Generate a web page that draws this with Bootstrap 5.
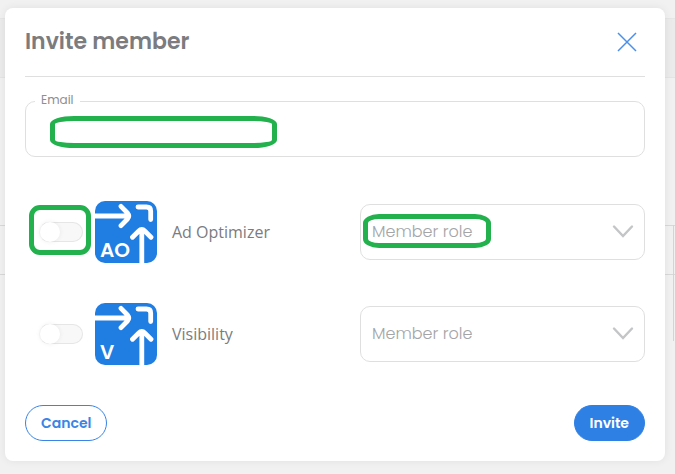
<!DOCTYPE html>
<html lang="en">
<head>
<meta charset="utf-8">
<meta name="viewport" content="width=device-width, initial-scale=1">
<title>Invite member</title>
<link href="https://cdn.jsdelivr.net/npm/bootstrap@5.3.0/dist/css/bootstrap.min.css" rel="stylesheet">
<style>
  body { background: #f1f1f1; color: #7a7c7f; font-family: Poppins, Inter, sans-serif; }
  .backdrop-page { z-index: -1; }
  .backdrop-band { height: 60px; margin-top: 18px; background: #ebebeb; border-top: 1px solid #e6e6e6; border-bottom: 1px solid #e4e4e4; }
  .backdrop-row { height: 50px; margin-top: 147px; border-top: 1px solid #d8d8d8; border-bottom: 1px solid #d8d8d8; }
  .backdrop-side { height: 116px; margin-top: -50px; margin-right: 1px; border-right: 1px solid #d4d4d4; }
  .shell { padding: 8px 10px 13px 5px; }
  .dialog-panel { border-radius: 8px; padding: 20px; box-shadow: 0 0 8px rgba(0,0,0,.07); }
  .dialog-head { height: 49px; padding-bottom: 20px; border-bottom: 1px solid #dfdfdf; }
  .dialog-title { font-size: 22px; line-height: 28px; }
  .close-btn { padding: 0 8px; line-height: 0; }
  .field { height: 56px; border: 1px solid #dfdfdf; border-radius: 10px; color: #a3a5a7; background: #fff; font-size: 16px; font-weight: 300; }
  .email-box { margin-top: 24px; }
  .email-box .field { padding: 0 24px; }
  .email-label { top: -9px; left: 10px; padding: 0 6px; font-size: 12px; line-height: 16px; color: #8c8e90; background: #fff; }
  .products { margin-top: 44px; gap: 40px; }
  .product { display: grid; grid-template-columns: minmax(0, 335fr) minmax(0, 285fr); }
  .product-name { font-family: "Open Sans", sans-serif; font-size: 16px; margin-left: 15px; }
  .switch-box { width: 70px; padding-left: 14px; }
  .toggle { appearance: none; width: 44px; height: 20px; border: 1px solid #e6e6e6; border-radius: 10px; background: #f8f8f8; display: flex; align-items: center; }
  .toggle::before { content: ""; width: 20px; height: 20px; border-radius: 50%; background: #fff; box-shadow: 0 0 5px rgba(0,0,0,.07); }
  .toggle:not(:checked) { border-left-color: transparent; }
  .toggle:checked { justify-content: flex-end; background: #2f80e4; }
  .role-select { appearance: none; padding: 0 44px 0 11px; }
  .chevron { right: 11px; top: 20px; pointer-events: none; }
  .marker { pointer-events: none; border: 5px solid #22b14c; }
  .marker-email { left: 25px; top: 15px; width: 227px; height: 32px; border-radius: 24px / 8px; }
  .marker-switch { left: 4px; top: -17px; width: 62px; height: 50px; border-radius: 11px; }
  .marker-role { left: 3px; top: 10px; width: 128px; height: 34px; border-radius: 16px / 9px; }
  .logo-text { fill: #fff; font-size: 20px; font-weight: 600; }
  .dialog-actions { margin-top: 40px; }
  .pill { height: 36px; padding: 0 15px; font-size: 14px; font-weight: 600; --bs-btn-color: #3984e6; --bs-btn-border-color: #3984e6; }
  .pill-main { --bs-btn-color: #fff; --bs-btn-bg: #2f80e4; --bs-btn-border-color: #2f80e4; }
</style>
</head>
<body>
<div class="backdrop-page position-absolute top-0 start-0 w-100 overflow-hidden" aria-hidden="true">
  <div class="backdrop-band"></div>
  <div class="backdrop-row"></div>
  <div class="backdrop-side"></div>
</div>
<svg class="d-none" aria-hidden="true">
  <symbol id="logo" viewBox="0 0 62 62">
    <rect width="62" height="62" rx="10" fill="#207de2"/>
    <g fill="none" stroke="#fff" stroke-width="4.800" stroke-linecap="round" stroke-linejoin="round">
      <path d="M-3 15H33M26 5.300L32.500 12Q35 15 32.500 18L26 24.700M43 6H51.500Q55.700 6 55.700 10V18.500M46.800 65V30M37.500 36.300L43.800 30Q46.800 26.800 49.800 30L56 36.300"/>
    </g>
  </symbol>
  <symbol id="chev" viewBox="0 0 22 14"><path d="M2 2.500L11 12 20 2.500" fill="none" stroke="#c3c5c6" stroke-width="2.400" stroke-linecap="round"/></symbol>
</svg>
<main class="shell">
  <form class="dialog-panel bg-white" role="dialog" aria-labelledby="dialog-title">
    <header class="dialog-head d-flex align-items-center justify-content-between">
      <h1 class="dialog-title fw-semibold m-0" id="dialog-title">Invite member</h1>
      <button type="button" class="close-btn btn border-0" aria-label="Close">
        <svg width="20" height="20" viewBox="0 0 20 20"><path d="M1 1L19 19M19 1L1 19" stroke="#4a90e8" stroke-width="1.500"/></svg>
      </button>
    </header>
    <div class="email-box position-relative">
      <input class="field w-100 d-block" type="email" id="email">
      <label class="email-label position-absolute" for="email">Email</label>
      <span class="marker marker-email position-absolute"></span>
    </div>
    <div class="products d-flex flex-column">
      <div class="product align-items-center">
        <div class="d-flex align-items-center">
          <div class="switch-box position-relative">
            <input type="checkbox" role="switch" class="toggle" id="ao">
            <span class="marker marker-switch position-absolute"></span>
          </div>
          <svg width="62" height="62" aria-hidden="true"><use href="#logo"/><text class="logo-text" x="5" y="56">AO</text></svg>
          <label class="product-name" for="ao">Ad Optimizer</label>
        </div>
        <div class="position-relative">
          <select class="field role-select w-100 d-block" aria-label="Ad Optimizer role"><option>Member role</option></select>
          <svg class="chevron position-absolute" width="22" height="14"><use href="#chev"/></svg>
          <span class="marker marker-role position-absolute"></span>
        </div>
      </div>
      <div class="product align-items-center">
        <div class="d-flex align-items-center">
          <div class="switch-box">
            <input type="checkbox" role="switch" class="toggle" id="vis">
          </div>
          <svg width="62" height="62" aria-hidden="true"><use href="#logo"/><text class="logo-text" x="5" y="56">V</text></svg>
          <label class="product-name" for="vis">Visibility</label>
        </div>
        <div class="position-relative">
          <select class="field role-select w-100 d-block" aria-label="Visibility role"><option>Member role</option></select>
          <svg class="chevron position-absolute" width="22" height="14"><use href="#chev"/></svg>
        </div>
      </div>
    </div>
    <footer class="dialog-actions d-flex justify-content-between">
      <button type="button" class="pill btn rounded-pill">Cancel</button>
      <button type="submit" class="pill pill-main btn rounded-pill">Invite</button>
    </footer>
  </form>
</main>
<script src="https://cdn.jsdelivr.net/npm/bootstrap@5.3.0/dist/js/bootstrap.bundle.min.js"></script>
</body>
</html>
